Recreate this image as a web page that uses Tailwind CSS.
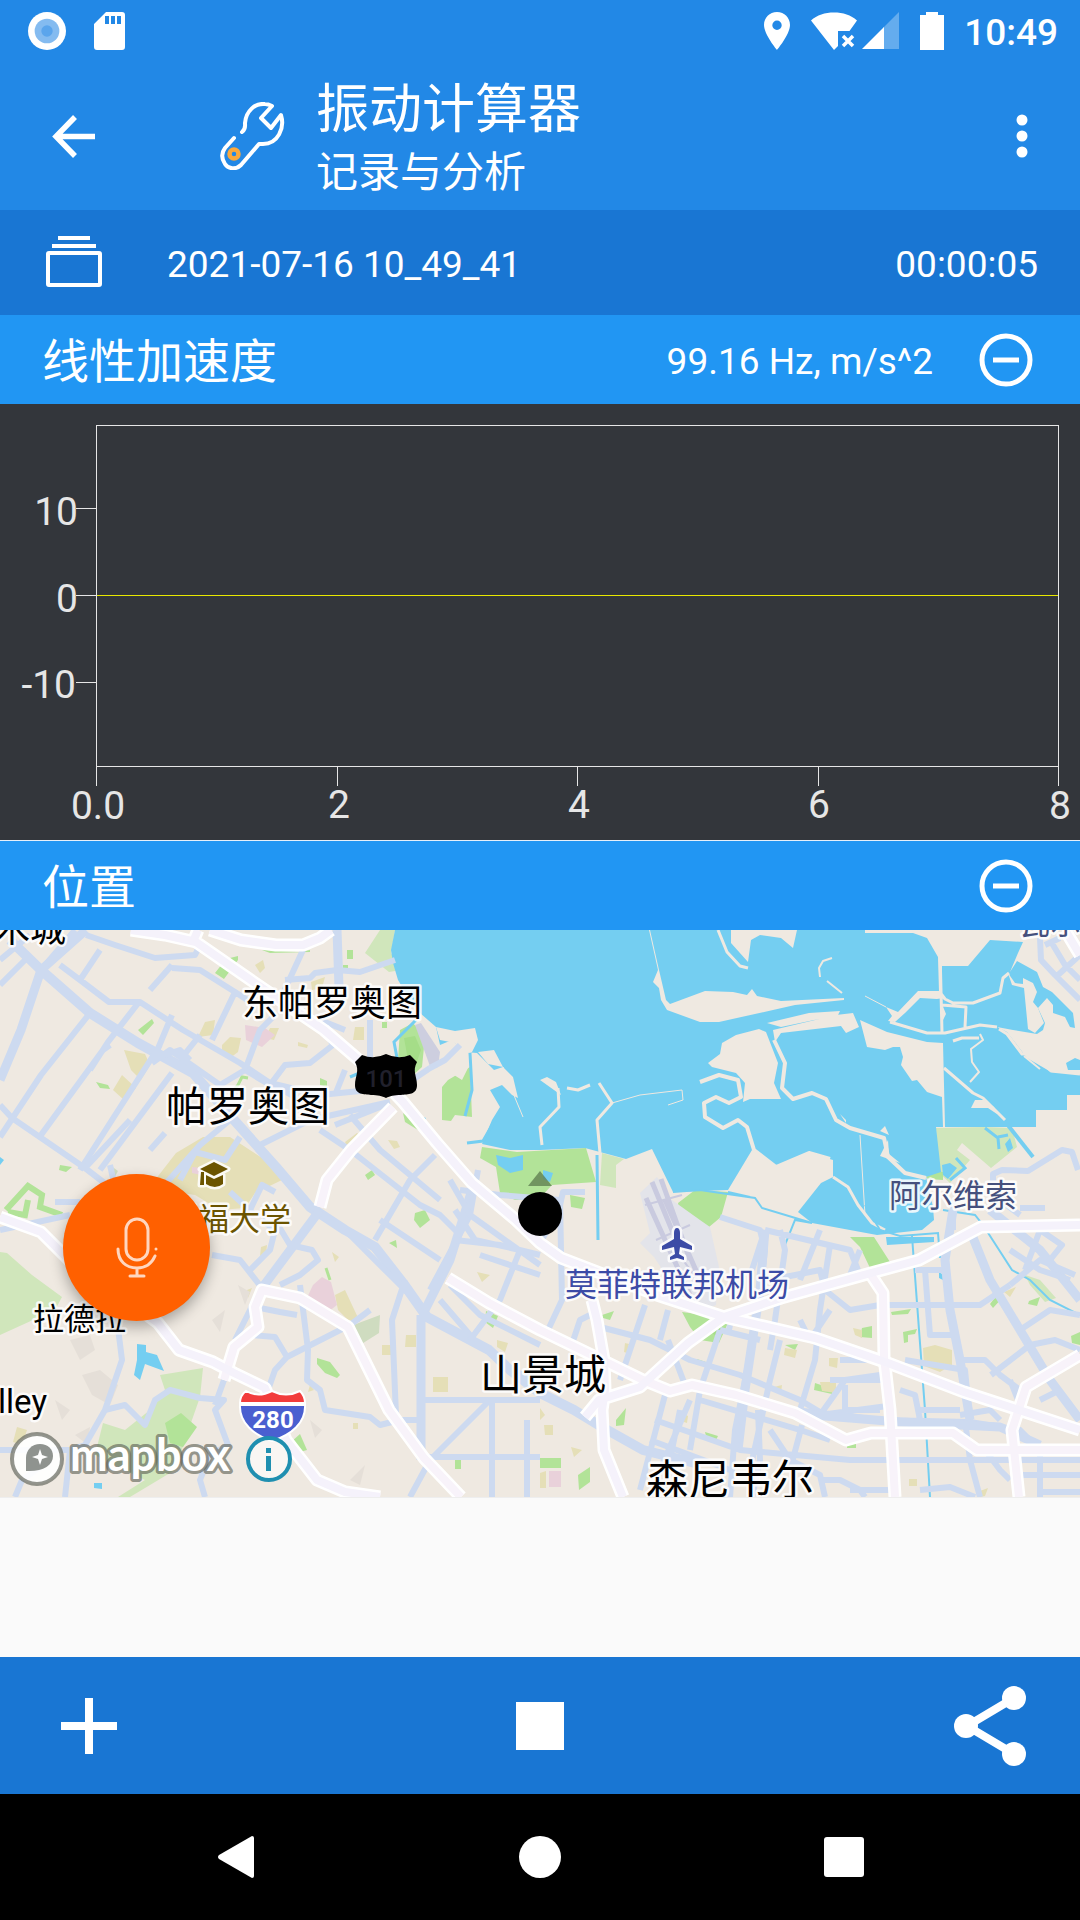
<!DOCTYPE html>
<html lang="zh-CN">
<head>
  <meta charset="UTF-8" />
  <meta name="viewport" content="width=device-width, initial-scale=1" />
  <title>振动计算器</title>
  <script src="https://cdn.jsdelivr.net/npm/@tailwindcss/browser@4"></script>
</head>
<body class="min-h-screen flex flex-col bg-[#fafafa] text-white text-[37px] leading-[44px] font-[Roboto,'Noto_Sans_CJK_SC',sans-serif]">

  <header class="bg-[#2288e6] h-[210px] flex flex-col">
    <!-- status bar -->
    <div class="h-[62px] flex items-center justify-between pl-7 pr-[22px]">
      <div class="flex items-center gap-7">
        <svg class="size-[38px]" viewBox="0 0 40 40"><circle cx="20" cy="20" r="20" fill="#fff"/><circle cx="20" cy="20" r="13" fill="#84bbf0"/><circle cx="20" cy="20" r="6" fill="#5ba5ec"/></svg>
        <svg class="w-[32px] h-[40px]" viewBox="0 0 32 40"><path fill="#fff" fill-rule="evenodd" d="M12 1h16a3 3 0 0 1 3 3v32a3 3 0 0 1-3 3H3a3 3 0 0 1-3-3V13zM11 5v8h4V5zm6 0v8h4V5zm6 0v8h4V5z"/></svg>
      </div>
      <div class="flex items-center">
        <svg class="w-[28px] h-[40px]" viewBox="0 0 28 40"><path fill="#fff" fill-rule="evenodd" d="M14 1C6.500 1 1 6.700 1 14c0 9.500 13 25 13 25s13-15.500 13-25C27 6.700 21.500 1 14 1zm0 8.500a4.700 4.700 0 1 1 0 9.400 4.700 4.700 0 0 1 0-9.400z"/></svg>
        <svg class="w-[46px] h-[40px] ml-5" viewBox="0 0 46 40"><path fill="#fff" d="M0 9.500C6 4 14 1.500 23 1.500S40 4 46 9.500L38.500 20H27v15l-4 4z"/><path stroke="#fff" stroke-width="3.500" d="M32 25l10 10M42 25L32 35"/></svg>
        <svg class="w-[38px] h-[40px] ml-1" viewBox="0 0 38 40"><path fill="#64acee" d="M38 1v37H22V17z"/><path fill="#fff" d="M1 38L23 16v22z"/></svg>
        <svg class="w-[24px] h-[40px] ml-[21px]" viewBox="0 0 24 40"><path fill="#fff" d="M6 1h12v3h6v35H0V4h6z"/></svg>
        <span class="ml-5 pt-1 font-medium">10:49</span>
      </div>
    </div>
    <!-- app bar -->
    <div class="flex-1 flex items-center pl-[46px] pr-[30px]">
      <button aria-label="返回"><svg class="size-[56px]" viewBox="0 0 56 56"><path d="M29 9L10 28.500 29 48M11 28.500H49" fill="none" stroke="#fff" stroke-width="5.500"/></svg></button>
      <svg class="size-[68px] ml-[117px]" viewBox="0 0 68 68" fill="none" stroke="#fff" stroke-width="4" stroke-linecap="round" stroke-linejoin="round">
        <path d="M23 30c4-3 3-6 3-9C27 9 36 1 46 2c3 0 5 1 7 2L42 16l10 10L62 13c4 13-3 29-18 29h-4L22 63c-5 5-13 4-16-1-4-6-3-12 0-16l9-10"/>
        <circle cx="15" cy="52" r="4.500" stroke="#fba93c" stroke-width="4.500"/>
      </svg>
      <div class="ml-[29px] pt-2 flex-1">
        <h1 class="text-[53px] leading-[66px]">振动计算器</h1>
        <p class="text-[42px] leading-[60px]">记录与分析</p>
      </div>
      <button aria-label="更多"><svg class="size-[56px]" viewBox="0 0 56 56" fill="#fff"><circle cx="28" cy="12" r="5.500"/><circle cx="28" cy="28" r="5.500"/><circle cx="28" cy="44" r="5.500"/></svg></button>
    </div>
  </header>

  <section class="h-[105px] bg-[#1976d3] flex items-center pl-[45px] pr-[42px]">
    <svg class="w-[58px] h-[54px]" viewBox="0 0 58 54" fill="none" stroke="#fff" stroke-width="4"><path d="M13 2h32M7 10h44"/><rect x="3" y="17" width="52" height="32" rx="1"/></svg>
    <span class="ml-16 pt-1 flex-1">2021-07-16 10_49_41</span>
    <time class="pt-1">00:00:05</time>
  </section>

  <section class="h-[89px] bg-[#2196f3] flex items-center pl-[42px] pr-[45px]">
    <h2 class="flex-1 pt-1 text-[47px]">线性加速度</h2>
    <span class="pt-1">99.16 Hz, m/s^2</span>
    <button class="ml-[44px]" aria-label="收起线性加速度"><svg class="size-[58px]" viewBox="0 0 58 58" fill="none" stroke="#fff" stroke-width="5"><circle cx="29" cy="29" r="24"/><path d="M16 29h26"/></svg></button>
  </section>

  <svg class="block w-full h-auto bg-[#33363b]" viewBox="0 0 1080 436" shape-rendering="crispEdges">
    <path d="M96.500 382V21.500H1058.500V382M96.500 362.500H1058.500M337.500 362v20M577.500 362v20M818.500 362v20M76 104.500h20M76 191.500h20M76 278.500h20" fill="none" stroke="#e6e6e6"/>
    <path d="M97 191.500H1058" stroke="#e8e800"/>
    <g class="text-[39px]" fill="#e6e6e6" text-anchor="end">
      <text x="78" y="121">10</text>
      <text x="78" y="208">0</text>
      <text x="76" y="294">-10</text>
    </g>
    <g class="text-[39px]" fill="#e6e6e6" text-anchor="middle">
      <text x="98" y="415">0.0</text>
      <text x="339" y="414">2</text>
      <text x="579" y="414">4</text>
      <text x="819" y="414">6</text>
      <text x="1060" y="415">8</text>
    </g>
  </svg>

  <section class="h-[90px] bg-[#2196f3] border-t border-[#e6f0fa] flex items-center pl-[42px] pr-[45px]">
    <h2 class="flex-1 pt-1 text-[47px]">位置</h2>
    <button aria-label="收起位置"><svg class="size-[58px]" viewBox="0 0 58 58" fill="none" stroke="#fff" stroke-width="5"><circle cx="29" cy="29" r="24"/><path d="M16 29h26"/></svg></button>
  </section>

  <main class="relative border-b border-[#eeeeee]">
    <svg class="block w-full h-auto bg-[#efe9e1]" viewBox="0 0 1080 567">
      <defs>
        <path id="freeways" d="M131 0L165 5 196 12 255 53 324 100 382 150 403 172 437 213 472 253 516 290 540 313 561 328 600 343 657 365 724 387 815 408 888 433 964 462 1019 480 1080 500M192 14L198 0M210 0L241 10 276 15H303L320 8 331 0M0 287L41 302 69 330 120 365 158 393 179 420 213 432 234 443 265 458 286 510 317 550 345 562 380 567M585 487L599 470 640 457 688 413 724 387 781 368 871 343 919 330 981 297 1080 295M592 370L597 390 604 430 605 460 602 480 604 520 623 567M1065 0L1080 25"/>
        <path id="expressways" d="M224 450L234 417 258 397 255 377 262 360 300 368 348 397 389 480 424 528 461 567M393 177L351 220 327 250 320 277M448 348L489 373 540 400 602 430 643 450 670 461 692 455 736 465 795 483 846 510 871 503H953L977 520H1080M871 345L883 363 884 427 890 480 895 567M1080 425L1026 457 1012 500 1019 567"/>
      </defs>

      <!-- parks -->
      <g fill="#d0e6bb">
        <path d="M380 0H395L391 23 401 40 389 42 365 23zM602 223L624 229 616 235V258L600 255zM936 198L984 197 1012 198 1017 217 991 238 962 213 957 220 970 230 950 253 938 242zM0 322L7 323 32 345 62 367 55 380 0 405zM103 493L125 500 150 480 165 460 160 445 203 438 200 467 185 510 175 540 130 567H118L145 550 95 525z"/>
        <path d="M1025 345L1040 350 1056 368 1045 372 1030 355z"/>
      </g>
      <path fill="#cfdcc0" d="M348 397L380 385 379 403 360 415zM110 235L118 241 112 252z"/>
      <g fill="#b2e398">
        <path d="M400 100L413 93 425 107 422 137 413 145 398 130zM448 150L470 137 472 187 455 185 451 191 442 190V157zM482 217L517 222 586 218 596 252 552 255 540 268 515 270 500 263 496 237 480 228zM678 273L695 260 728 262 721 287 709 297 680 287zM850 307H874L890 332 870 338 860 317zM682 382L719 387 728 393 719 413 700 410 690 397z"/>
        <path d="M165 493L181 483 197 497 183 517 170 513zM540 528H561V538H540zM578 545L590 537V552L579 560zM616 490L626 478 624 495 616 496zM215 43L226 29 238 26V30L224 49zM138 100L152 89 154 93 143 105zM96 152L108 155 110 159 100 158zM188 135L203 144 200 147 187 138zM320 148L327 151V157L320 155zM403 183L420 197 418 200 405 192zM347 20H353V29H347zM343 35H348V40H343zM382 92H387V98H382zM60 235L72 237 66 242 59 240zM317 428L330 432 340 445 337 448 325 443 317 434zM486 381L498 386 493 398 485 392zM415 283L425 280 430 290 420 298 414 290zM389 313L396 310 397 318zM365 245L372 240 375 245 368 250zM352 213L360 205 363 210 356 215zM291 512L300 504 307 520 300 522zM439 450H448V454H439zM455 530H461V539H455zM862 398L872 396V408L860 407zM891 382L911 379 908 384 892 385zM903 402L917 399 915 404 908 405V412L904 413zM815 453L833 459 832 464 814 460zM705 502L718 506 716 510 706 506zM847 514H856V518H847zM990 374L997 365 1004 366 993 378zM1029 371L1040 367 1037 376 1028 374zM1071 406L1080 402V415L1072 413zM602 385L614 381 610 390 603 388zM697 429L706 432 705 435 697 434zM785 415L798 414 795 420zM974 312L982 323 980 324zM570 265L585 268 582 279 571 277zM926 247L935 241 943 242V250L928 249zM262 20L300 22 310 20V22L270 23z"/>
        <path fill="none" stroke="#b2e398" stroke-width="6" d="M6 280L28 256 42 265 40 277 62 285M8 282L25 285 28 270"/>
        <path fill="none" stroke="#b2e398" stroke-width="3" d="M230 165L238 155 242 147 248 148M326 338L330 350"/>
      </g>
      <path fill="#a5dd88" d="M404 108L415 106 421 120 414 140 408 130zM700 395L722 398 718 407z"/>
      <g fill="#e5dfb7">
        <path d="M155 250L176 223 203 207 230 207 276 237 282 250 255 263 245 278 220 280 195 265 175 262zM113 160L122 145 136 158 124 170zM124 120L145 124 150 135 141 150 131 140zM255 35L263 30 265 38 260 43zM311 52L325 47 322 58 312 60zM222 115L230 107 241 108 238 122 230 128 222 122zM270 98H279L274 110 265 108zM298 112L308 115 307 118 298 116zM355 97H364V110H353zM205 92L215 90 213 105 198 107zM345 212L357 203 362 207 350 222zM388 210L397 211 400 217 394 219zM335 365L345 360 360 392 348 390 338 380zM261 317L267 315 266 325 260 326zM332 322L339 327 335 332zM406 405H416V417H405zM382 415H392V425H382zM433 447H448V462H433zM477 342L490 345 482 352zM497 410L508 413 505 422 497 417zM17 497L27 500 22 515 13 512zM247 360L252 358 248 368z"/>
        <path d="M923 418L935 415 952 420V435L940 442 924 436zM785 418L797 420 795 428 784 425zM829 428H838L837 438 829 436zM820 452H836V463L822 461zM774 457L782 455 781 463 775 462zM544 495H553V505H545zM540 478L545 485 540 490zM571 517L582 520 574 527zM540 543L546 541V558H540zM1004 362L1016 357 1010 367zM853 398L862 400V408L855 405zM625 413L629 414 627 423 624 422zM682 483L688 486 687 493 681 491zM909 549H917V556H909zM980 561L988 558 985 566 980 567zM310 455L314 460 308 462zM353 493H358V499H353z"/>
      </g>
      <path fill="#e9d1da" d="M305 372L313 355 322 347 331 352 337 375 328 382zM245 95L265 98 275 105 262 117 246 110zM192 237L202 238 201 245 192 243zM549 541H561V557H549z"/>
      <!-- terrain shading -->
      <path fill="#e5dfd8" d="M70 410L90 405 95 420 80 430zM82 445L100 440 118 455 110 475 92 465zM55 470L70 480 62 490zM350 550L365 535 360 555zM310 490L322 500 315 508zM212 390L225 380 220 402zM238 355L250 362 245 375zM75 505L90 497 88 515z"/>
      <!-- airfield -->
      <path fill="#e3e4ea" d="M640 263L657 247 672 270 700 290 710 297 719 337 716 375 700 382 678 363 654 327 640 313 650 303z"/>
      <path fill="none" stroke="#c9cadf" stroke-width="5" d="M652 252L676 310M661 249L690 330M646 268L690 365M665 270L698 345"/>
      <path fill="none" stroke="#c9cadf" stroke-width="2" d="M645 275L682 265M656 310L690 295M672 315L705 360"/>
      <path fill="#cdcedf" d="M415 95L421 93 440 122 438 137 431 139z"/>

      <!-- bay -->
      <path fill="#74cef1" d="M395 0L391 20 393 33 398 50 410 70 420 83 436 97 440 115 452 110 465 122 477 123 494 140 503 137 513 147 518 168 512 165 502 155 490 160 500 177 492 190 482 214 510 220 540 220 585 218 626 229 652 219 673 262 728 260 752 220 776 237 809 223 833 230V247L821 253 798 282 812 293 877 305 922 300 934 290 933 277 926 247 941 242 936 197H1036V180H1067V165H1080V144L1051 142 1027 128 1007 102 997 97 1013 100 1037 104 1043 100 1045 93 1038 78 1047 68 1053 75V83L1065 87 1070 97 1075 98 1073 83 1052 62 1043 57 1037 42 1017 31 1010 42 1018 23 1023 12 990 10 968 36H942V65L939 62 938 27 927 8 913 3H865V0z"/>
      <g fill="#efe9e1">
        <path d="M731 0V13L748 32 751 10 760 5 781 8 793 18 797 0z"/>
        <path d="M650 0L659 40 666 70 670 74 705 61 733 62 747 65 752 59 757 66 781 71 844 68V70L795 75 719 92H700L667 80 661 70 659 58 653 52 658 40 649 0z"/>
        <path d="M708 133L720 124 722 113 736 105 759 99 766 102 778 133 774 153 781 169H750L743 172 745 153 736 143 712 137z"/>
        <path d="M767 93L809 83 840 81 838 85 781 97zM773 100L836 85 853 83 859 97 846 103 841 96 781 103 775 112z"/>
        <path d="M860 90L887 102 927 112 943 113 945 197H943L942 167 927 162 917 150 912 151 901 135 903 127 900 117 893 117 885 120 867 117z"/>
        <path d="M1023 48L1033 53 1037 62 1033 72 1038 78 1044 93 1035 103 1028 99 1024 58 1012 55 1008 43 1015 53 1023 54z"/>
        <path d="M886 77L898 82 918 61H939L943 68 937 69 920 68 905 83 895 92 888 91 892 86z"/>
        <path d="M971 178L975 170 984 170 994 177 997 184 988 178zM880 226L888 210 889 224 900 233zM880 201L885 196 889 205zM840 184L846 190V193zM540 150L547 147 556 152 561 165zM942 74L946 84 942 92z"/>
        <path d="M436 97L455 101 475 98 478 110 472 122 463 124 455 113 440 110zM478 122L494 120 503 137 488 134zM455 135L468 138 462 150 454 145z"/>
      </g>
      <g fill="none" stroke="#efe9e1" stroke-width="3" stroke-linejoin="round">
        <path d="M718 0L727 22 740 36 748 38M939 61L945 69 953 73 973 73 1000 63 1003 48 1009 43M940 20L942 103M942 75L966 77 965 97M890 92L927 103H945L980 95 997 97M953 111L962 108 979 108"/>
        <path stroke-width="2" d="M832 28L823 31 819 38 820 47M827 51L842 63"/>
        <path stroke-width="4" d="M774 110L785 133 782 158 793 169 812 163 826 169 836 190 850 198 884 208 888 227 905 243 926 248"/>
        <path stroke-width="4" d="M700 152L719 145 738 150 741 167 729 173 716 167 704 173 705 187 723 198 738 190 747 197 754 220 776 237 809 223 830 229"/>
        <path d="M558 158L559 177 540 197 542 215M599 153L612 173 597 190 600 223M567 158L578 160 590 155M944 138L973 163 983 168 1005 190M999 99L1007 104 1022 124 1033 124 1051 141 1080 144"/>
        <path stroke-width="2" d="M980 104L983 110 971 119 972 132 979 142 970 152M1024 126L1040 139"/>
        <path stroke-width="3" d="M833 247L848 257 858 275 872 293 885 300"/>
        <path stroke-width="1" d="M682 160L683 170 668 175M612 173L640 165 682 160M860 205L865 285M865 66L886 77M503 137L513 163 523 187"/>
      </g>
      <g fill="none" stroke="#74cef1" stroke-width="3">
        <path stroke-width="4" d="M1007 194L1033 227"/>
        <path d="M597 225L598 310M470 123L472 160 465 186M398 133L394 112 416 90M467 213L483 211 495 190M350 147L362 142M985 198L998 208 999 219M998 207L1008 205M950 250L965 238 956 228"/>
        <path stroke-width="2" d="M673 262L700 260 755 268 762 278 812 293 795 290 785 315 782 340M728 262L750 267M865 275L880 300 900 306 938 303 940 328M912 306L925 480 930 567M943 280L975 285 983 295 1012 340 1030 350 1050 370 1080 385"/>
      </g>
      <path fill="#74cef1" d="M496 225L510 228 523 225V240L510 243 498 235zM886 307H934V312L887 315zM939 342L945 346V351L939 348zM137 414L146 415V422L157 425 164 441 145 434 140 450 134 445 137 430zM94 553L102 553V559L94 558zM420 186L426 188 422 195zM0 227L4 230 0 235zM942 235L950 233 957 238 948 249 943 245zM1005 214L1010 208 1013 218 1008 222zM543 240L553 243 550 252 543 249zM1066 133L1075 128 1080 130V140H1068z"/>

      <!-- streets -->
      <g fill="none" stroke="#cddaf0" stroke-linejoin="round" stroke-width="6">
        <path stroke-width="10" d="M10 10L41 40 90 83 138 113 193 143 234 190 276 237 310 277 345 300 375 317 403 353 427 387 489 420 510 440 540 463 574 480 602 497 643 520 695 533"/>
        <path stroke-width="9" d="M0 150L21 100 41 40 86 0M337 0L339 57M421 385V530M262 358L320 280M475 250L450 330 425 380"/>
        <path d="M0 30L30 5M0 55L25 30M41 40L75 0M60 35L80 50 109 72 140 72 183 100 240 133 270 153 300 170M80 50L100 20M86 5L115 15 155 28 195 25 200 15M150 60L172 35 M172 38L200 40 235 62 212 110M235 62L255 75M280 70L303 20M139 72L108 112 90 140M90 83L41 145 0 207M110 115L103 120 41 205M172 85L152 133M160 115L80 240M172 143L100 240M150 220L165 203M152 133L170 120 220 155 245 140 260 100 275 85M180 130L200 105M165 125L180 120 190 130"/>
        <path d="M0 175L12 188 85 238 120 265M55 272H80M110 235L118 270M0 300L70 285M85 238L130 190M160 260L200 215 230 190M180 250L195 222 225 230 240 207M245 140L270 155 285 135 310 133 333 115 330 100M333 115L320 90 345 100M285 50L310 48 315 43 337 40 360 42 395 30M370 90V140M335 165L345 140M270 153L320 165 370 160M260 215L310 190 390 172M335 195L385 175M320 200L350 220 420 275 440 285 460 305M250 280L262 255 275 262M255 285L230 262M350 185L380 220 440 270M435 225L410 250 375 310M478 240L470 285 430 360"/>
        <path d="M212 325L240 330 262 358M262 290L275 300 270 320 250 340M275 290L290 315 312 320 318 330 300 345 280 355M250 380L260 358M235 410L250 380M255 377L280 382 297 385M300 355L308 420 307 450 320 460 325 480 370 487 380 495 400 490H421M252 405L275 407 287 427 350 395 370 380M287 427L275 440 268 460M117 390L122 430 105 480 85 515 70 520 0 520M105 480L125 475 145 495 155 470 170 460 200 468 224 470 215 480 228 515 210 525 200 550 205 567M70 520L65 567M15 567L22 550 50 530M224 450L215 475"/>
        <path d="M345 300L390 345 420 375M405 350L392 390 396 485M425 470H540M425 527H540M492 472V567M527 490V567M410 567L430 530 490 470M510 440L540 450M450 355L480 385 540 415M440 370L470 405M470 410L500 370 520 320M450 250L470 285 540 335M460 260L500 265 560 270 562 370 548 400M455 310L500 315 540 325M480 325L540 345M380 290L440 330M455 280L475 310 520 320"/>
        <path d="M542 310L560 275 563 262 585 262M720 287L760 300 765 320 758 380M765 300L850 320 860 345M765 300L752 340M780 300L785 320 775 390 770 420M830 315L820 380 815 430 800 480M770 350L820 340 825 360 850 380 880 375H980L1010 355M800 390L810 410 830 380M755 395L745 450 735 500 730 567M720 400L700 460 690 520M645 375L620 450M600 397L650 410 690 430 740 445 800 470 825 485M668 410L685 455M668 380L660 410M570 420L580 390 600 380M720 400L760 410M780 410L770 450 750 540M690 470L660 540M665 465L640 560M680 480L670 530M655 490L740 520 850 530H1080M650 510L730 540M700 470L800 500 830 510M730 395L728 405M770 500L790 530 820 545 825 567"/>
        <path d="M758 480L760 530 752 567M802 495L790 540M820 485L845 450 880 445M845 455V480H880M840 430H880M830 450H885M820 485L895 475M820 300L800 350M860 320L850 345M900 460L915 465 920 490M905 430L965 440 970 490M920 480H960M795 480L880 490 970 492 1020 500 1040 520V567M960 485L990 480 1000 490M822 550H840L860 560 865 567M850 560H900M920 560L950 557 975 567M965 490L970 530 980 567M985 520L1000 540 1010 550M1020 545H1080M1040 562H1080"/>
        <path stroke-width="9" d="M953 280L945 330 950 380 960 430 970 490M970 300L990 350 1020 400 1050 450 1080 490M990 280L1040 320 1080 370M800 484L900 492 1000 497 1040 515M765 300L760 360 745 460 738 520"/>
        <path d="M925 340L930 405H955M915 340H950M1025 340L1040 300 1062 315 1050 330M1010 320L1040 340 1070 350M1010 355L1040 330 1075 345M991 445L1030 415 1055 410 1080 420M960 430L985 430 1000 445 1020 460M1010 450L1020 475M1040 470L1060 460M1020 400L1050 380 1080 385M993 252L993 244 1002 240 1028 241 1062 220 1072 222 1078 240M953 270V300M1000 270L1020 285M1020 278H1045M1040 8L1041 30 1055 45 1080 70M1050 10L1065 35 1080 50M1058 45L1080 25M1045 15L1060 8M430 138L445 130 460 115M405 155L430 138"/>
      </g>
      <!-- highways -->
      <g fill="none" stroke="#fff" stroke-width="13" stroke-linejoin="round">
        <use href="#freeways"/>
        <use href="#expressways"/>
      </g>
      <g fill="none" stroke-width="8" stroke-linejoin="round">
        <use href="#expressways" stroke="#f8f3fa"/>
        <use href="#freeways" stroke="#f5f2fb"/>
      </g>

      <!-- shields -->
      <path fill="#000" d="M362 125q12 5 24-1 12 6 24 1l7 7c-5 9 0 14 0 23 0 10-9 9-16 10-7 0-11 1-15 3-4-2-8-3-15-3-7-1-16 0-16-10 0-9 5-14 0-23z"/>
      <text class="text-[24px] font-medium" x="386" y="157" text-anchor="middle" fill="#20202c">101</text>
      <path fill="#4a5fd0" stroke="#fff" stroke-width="2" d="M240 475H305c1 18-14 30-33 36-18-6-33-18-32-36z"/>
      <path fill="#f23c3c" stroke="#fff" stroke-width="2" d="M246 461q12 7 26 0 14 7 28 0c3 3 5 7 5 12H240c0-5 2-9 6-12z"/>
      <text class="text-[24px] font-bold" x="273" y="498" text-anchor="middle" fill="#fff">280</text>

      <!-- place names -->
      <g fill="#000" stroke="#fff" stroke-opacity=".85" stroke-width="5" stroke-linejoin="round" paint-order="stroke">
        <text class="text-[36px]" x="242" y="86">东帕罗奥图</text>
        <text class="text-[41px]" x="166" y="191">帕罗奥图</text>
        <text class="text-[42px]" x="480" y="460">山景城</text>
        <text class="text-[42px]" x="646" y="565">森尼韦尔</text>
        <text class="text-[36px]" x="66" y="12" text-anchor="end">红木城</text>
        <text class="text-[31px]" x="33" y="400">拉德拉</text>
        <text class="text-[33px]" x="47" y="483" text-anchor="end">lley</text>
        <text class="text-[31px]" x="136" y="300" fill="#6b5400">斯坦福大学</text>
        <text class="text-[32px]" x="565" y="366" fill="#3c4ba6">莫菲特联邦机场</text>
        <text class="text-[32px]" x="889" y="277" fill="#45507d">阿尔维索</text>
        <text class="text-[31px]" x="1019" y="4" fill="#45507d">瓦尔</text>
        <path fill="#6b5400" d="M200 239L214 232 228 239 214 246zM206 245L214 249 223 245V254q-8 6-17 0zM201 242h3v13h-4z"/>
        <path fill="#3c4ba6" d="M677 298c2 0 3 2 3 5v6l12 7v4l-12-3-1 7 5 3v3l-7-2-7 2v-3l5-3-1-7-12 3v-4l12-7v-6c0-3 1-5 3-5z"/>
      </g>

      <!-- current position -->
      <path fill="#5b7a4d" fill-opacity=".75" d="M540 241L552 256H528z"/>
      <circle cx="540" cy="284" r="22" fill="#000"/>

      <!-- attribution -->
      <circle cx="37" cy="529" r="25" fill="#fff" fill-opacity=".92" stroke="#6f7168" stroke-opacity=".75" stroke-width="4"/>
      <path fill="#8f938f" d="M26 541V528c0-8 6-14 14-14s13 5 13 12c0 10-11 16-27 15z"/>
      <path fill="#fff" d="M40 519l2 6 6 2-6 2-2 6-2-6-6-2 6-2z"/>
      <text class="text-[45px] font-bold font-[Lato,sans-serif]" x="70" y="541" fill="#fff" stroke="#5f6358" stroke-opacity=".65" stroke-width="6" stroke-linejoin="round" paint-order="stroke">mapbox</text>
      <circle cx="269" cy="529" r="21" fill="#fff" fill-opacity=".6" stroke="#1f8fb0" stroke-width="4"/>
      <path fill="#1f8fb0" d="M266 518h5v5h-5zM266 526h5v15h-5z"/>
    </svg>

    <button class="absolute left-[63px] top-[244px] size-[147px] rounded-full bg-[#ff6000] flex items-center justify-center shadow-[0_6px_14px_rgba(0,0,0,0.3)]" aria-label="录音">
      <svg class="w-[44px] h-[64px]" viewBox="0 0 44 64" fill="none" stroke="#ffd6bf" stroke-width="3" stroke-linecap="round"><rect x="11" y="3" width="22" height="41" rx="11"/><path d="M3 33c0 12 8 19 19 19 9 0 15-5 18-12M41 33v0M22 52v8M15 60h14"/></svg>
    </button>
  </main>

  <div class="flex-1"></div>

  <div class="h-[137px] bg-[#1976d3] grid grid-cols-3 items-center px-[53px]">
    <button class="justify-self-start ml-1.5" aria-label="添加"><svg class="size-[60px]" viewBox="0 0 60 60"><path d="M30 2v56M2 30h56" stroke="#fff" stroke-width="8"/></svg></button>
    <button class="justify-self-center" aria-label="停止"><svg class="size-[60px]" viewBox="0 0 60 60"><path fill="#fff" d="M6 6h48v48H6z"/></svg></button>
    <button class="justify-self-end" aria-label="分享"><svg class="w-[74px] h-[82px]" viewBox="0 0 74 82" fill="#fff"><path d="M61 13L14 41 61 69" fill="none" stroke="#fff" stroke-width="8"/><circle cx="61" cy="13" r="12"/><circle cx="13" cy="41" r="12"/><circle cx="61" cy="69" r="12"/></svg></button>
  </div>

  <nav class="h-[126px] bg-black flex items-center justify-around px-[84px]">
    <button aria-label="后退"><svg class="size-[44px]" viewBox="0 0 44 44"><path fill="#fff" d="M38 1q2 0 2 2v38q0 2-2 2L5 24q-2-2 0-4z"/></svg></button>
    <button aria-label="主屏幕"><svg class="size-[44px]" viewBox="0 0 44 44"><circle cx="22" cy="22" r="21" fill="#fff"/></svg></button>
    <button aria-label="最近任务"><svg class="size-[44px]" viewBox="0 0 44 44"><rect x="2" y="2" width="40" height="40" rx="3" fill="#fff"/></svg></button>
  </nav>

</body>
</html>
